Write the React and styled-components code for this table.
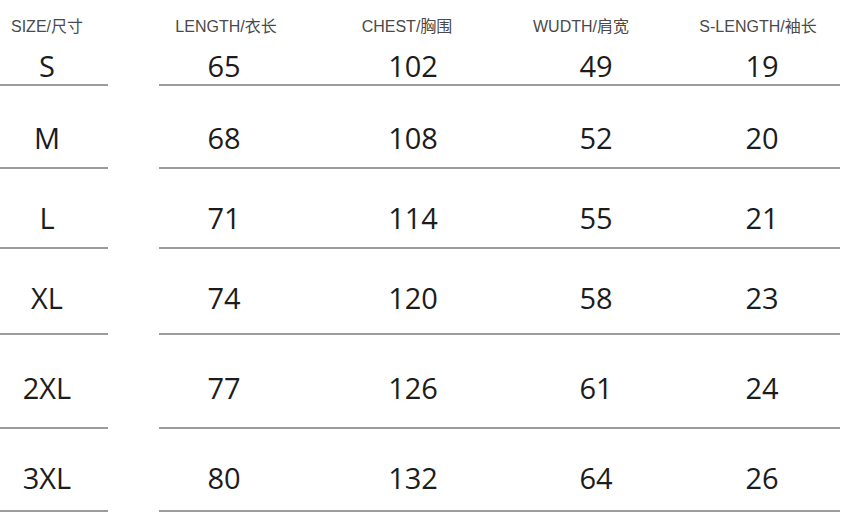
import React from 'react';
import styled, { createGlobalStyle } from 'styled-components';

const GlobalStyle = createGlobalStyle`
  html, body {
    margin: 0;
    padding: 0;
    background: #ffffff;
  }
`;

const HEAD_COLS = '134px 228px 120px 234px';
const VALUE_COLS = '130px 248px 118px 214px';

const headers = ['LENGTH/衣长', 'CHEST/胸围', 'WUDTH/肩宽', 'S-LENGTH/袖长'];

// size, values, padding-top, content height
const rows = [
  { size: 'S', values: [65, 102, 49, 19], pad: 16, height: 49 },
  { size: 'M', values: [68, 108, 52, 20], pad: 37, height: 81 },
  { size: 'L', values: [71, 114, 55, 21], pad: 34, height: 78 },
  { size: 'XL', values: [74, 120, 58, 23], pad: 34, height: 84 },
  { size: '2XL', values: [77, 126, 61, 24], pad: 38, height: 92 },
  { size: '3XL', values: [80, 132, 64, 26], pad: 34, height: 81 }
];

const Page = styled.div`
  width: 849px;
  height: 524px;
  overflow: hidden;
  background: #ffffff;
`;

const HeaderRow = styled.div`
  display: flex;
  padding-top: 19px;
  height: 16px;
  font-family: 'Liberation Sans', 'Noto Sans CJK SC', sans-serif;
  font-size: 16px;
  line-height: 16px;
  color: #4a4a4a;
  white-space: nowrap;
`;

const Row = styled.div`
  display: flex;
  font-family: 'Open Sans', 'Noto Sans', sans-serif;
  font-size: 29px;
  line-height: 30px;
  color: #1c1c1c;
`;

const SizeCell = styled.div`
  box-sizing: border-box;
  width: 108px;
  padding-right: 14px;
  text-align: center;
  ${props => (props.$ruled ? 'border-bottom: 2px solid #9c9c9c;' : '')}
  ${props => (props.$pad !== undefined ? `padding-top: ${props.$pad}px;` : '')}
  ${props => (props.$height !== undefined ? `height: ${props.$height + 2}px;` : '')}
`;

const Values = styled.div`
  box-sizing: border-box;
  margin-left: 51px;
  width: 681px;
  display: grid;
  grid-template-columns: ${props => props.$cols};
  ${props => (props.$ruled ? 'border-bottom: 2px solid #9c9c9c;' : '')}
  ${props => (props.$pad !== undefined ? `padding-top: ${props.$pad}px;` : '')}
  ${props => (props.$height !== undefined ? `height: ${props.$height + 2}px;` : '')}
`;

const Cell = styled.div`
  text-align: center;
  white-space: nowrap;
`;

const SizeChart = () => {
  return (
    <Page>
      <HeaderRow>
        <SizeCell>SIZE/尺寸</SizeCell>
        <Values $cols={HEAD_COLS}>
          {headers.map(h => (
            <Cell key={h}>{h}</Cell>
          ))}
        </Values>
      </HeaderRow>
      {rows.map(row => (
        <Row key={row.size}>
          <SizeCell $ruled $pad={row.pad} $height={row.height}>
            {row.size}
          </SizeCell>
          <Values $ruled $cols={VALUE_COLS} $pad={row.pad} $height={row.height}>
            {row.values.map((v, i) => (
              <Cell key={i}>{v}</Cell>
            ))}
          </Values>
        </Row>
      ))}
    </Page>
  );
};

export default function App() {
  return (
    <>
      <GlobalStyle />
      <SizeChart />
    </>
  );
}
